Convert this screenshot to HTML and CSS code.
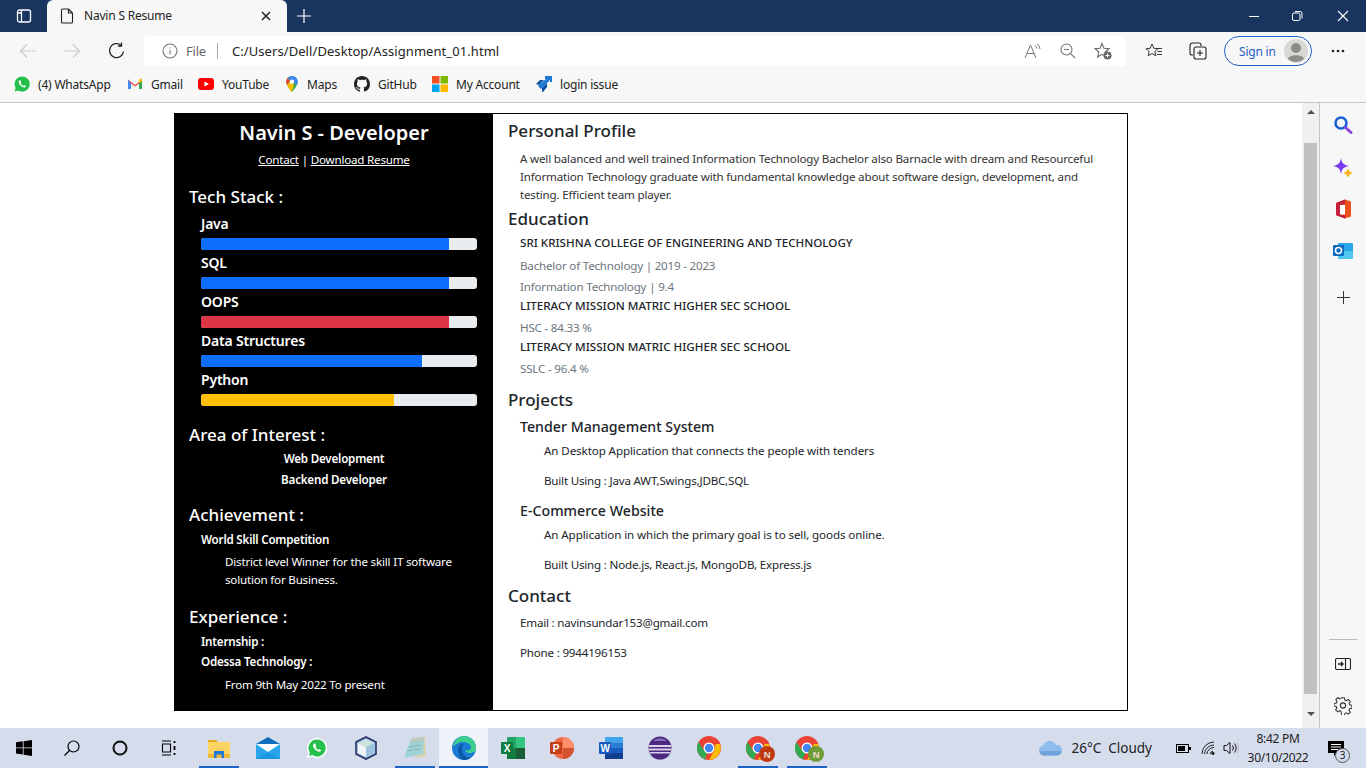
FILE: index.html
```html
<!DOCTYPE html>
<html lang="en">
<head>
    <meta charset="UTF-8">
    <title>Navin S Resume</title>
    <link rel="stylesheet" href="styles.css">
</head>
<body>
    <div class="tabstrip">
        <div class="tab-side">
            <svg width="16" height="16" viewBox="0 0 16 16" fill="none" stroke="#fff" stroke-width="1.3"><rect x="1.5" y="2" width="13" height="12" rx="2"/><path d="M5.5 2v12M1.5 5h4"/></svg>
        </div>
        <div class="tab">
            <svg width="14" height="16" viewBox="0 0 14 16" fill="none" stroke="#222" stroke-width="1.1"><path d="M2.5 1h6l4 4v9a1 1 0 0 1-1 1h-9a1 1 0 0 1-1-1V2a1 1 0 0 1 1-1zM8.500 1v4h4"/></svg>
            <span class="tab-title">Navin S Resume</span>
            <svg class="tab-close" width="10" height="10" viewBox="0 0 10 10" stroke="#222" stroke-width="1.5"><path d="M1 1l8 8M9 1l-8 8"/></svg>
        </div>
        <svg class="new-tab" width="16" height="16" viewBox="0 0 16 16" stroke="#fff" stroke-width="1.2"><path d="M8 1v14M1 8h14"/></svg>
        <div class="win-controls">
            <svg width="12" height="12" viewBox="0 0 12 12" stroke="#fff"><path d="M1 6.5h10"/></svg>
            <svg width="12" height="12" viewBox="0 0 12 12" fill="none" stroke="#fff"><rect x="1.5" y="3" width="7.5" height="7.5" rx="1.5"/><path d="M4 1.500h5a2 2 0 0 1 2 2v5"/></svg>
            <svg width="12" height="12" viewBox="0 0 12 12" stroke="#fff" stroke-width="1.1"><path d="M1 1l10 10M11 1L1 11"/></svg>
        </div>
    </div>

    <div class="toolbar">
        <svg class="nav-back" width="18" height="16" viewBox="0 0 18 16" fill="none" stroke="#ccc" stroke-width="1.2"><path d="M17 8H1.500M8 1.500L1.500 8 8 14.500"/></svg>
        <svg class="nav-forward" width="18" height="16" viewBox="0 0 18 16" fill="none" stroke="#ccc" stroke-width="1.2"><path d="M1 8h15.500M10 1.500L16.500 8 10 14.500"/></svg>
        <svg class="nav-refresh" width="18" height="18" viewBox="0 0 18 18" fill="none" stroke="#222" stroke-width="1.3"><path d="M15.500 9.500A7 7 0 1 1 13 3.200M13.500 0.500v3.500H10"/></svg>
        <div class="address">
            <svg width="16" height="16" viewBox="0 0 16 16" fill="none" stroke="#777" stroke-width="1.1"><circle cx="8" cy="8" r="7"/><path d="M8 7v4.500M8 4.200v1.300"/></svg>
            <span class="addr-file">File</span>
            <span class="addr-sep"></span>
            <span class="addr-url">C:/Users/Dell/Desktop/Assignment_01.html</span>
            <span class="addr-icons">
                <svg width="18" height="16" viewBox="0 0 18 16" fill="none" stroke="#777" stroke-width="1"><path d="M1 15L6.500 2 12 15M3 10.500h7M11 2.500a4 4 0 0 1 2 3M13 1a6 6 0 0 1 3 5"/></svg>
                <svg width="16" height="16" viewBox="0 0 16 16" fill="none" stroke="#777" stroke-width="1.1"><circle cx="6.500" cy="6.500" r="5.500"/><path d="M4 6.500h5M10.500 10.500L15 15"/></svg>
                <svg width="18" height="18" viewBox="0 0 18 18"><path d="M8 1.500l2 4.700 5 .5-3.800 3.300 1.200 5-4.400-2.700-4.400 2.700 1.200-5L1 6.700l5-.5z" fill="none" stroke="#666" stroke-width="1.1"/><circle cx="13.500" cy="13.500" r="4" fill="#666"/><path d="M13.500 11.500v4M11.500 13.500h4" stroke="#fff"/></svg>
            </span>
        </div>
        <svg class="tool-fav" width="18" height="16" viewBox="0 0 18 16" fill="none" stroke="#222" stroke-width="0.9"><path d="M7 1l1.800 4.300 4.200.4-3.200 2.800 1 4.400L7 10.500l-3.800 2.400 1-4.400L1 5.700l4.200-.4zM12 5.500h5M12.500 8.500h4.500M12 11.500h5"/></svg>
        <svg class="tool-coll" width="18" height="18" viewBox="0 0 18 18" fill="none" stroke="#222" stroke-width="1.1"><path d="M4 13H3a2 2 0 0 1-2-2V4a3 3 0 0 1 3-3h6a2 2 0 0 1 2 2v1"/><rect x="5" y="5" width="12" height="12" rx="2"/><path d="M11 8v6M8 11h6"/></svg>
        <div class="signin">
            <span>Sign in</span>
            <svg width="24" height="24" viewBox="0 0 24 24"><circle cx="12" cy="12" r="12" fill="#d8d8d4"/><circle cx="12" cy="9" r="5" fill="#8e8c88"/><path d="M4 20c1-5 15-5 16 0a12 12 0 0 1-16 0z" fill="#8e8c88"/></svg>
        </div>
        <svg class="tool-more" width="14" height="4" viewBox="0 0 14 4" fill="#222"><circle cx="2" cy="2" r="1.3"/><circle cx="7" cy="2" r="1.3"/><circle cx="12" cy="2" r="1.3"/></svg>
    </div>

    <div class="bookmarks">
        <a class="bookmark">
            <svg width="16" height="16" viewBox="0 0 16 16"><path d="M8 .5a7.500 7.500 0 0 0-6.400 11.300L.6 15.400l3.700-1A7.500 7.500 0 1 0 8 .5z" fill="#25c04c"/><path d="M5.500 4.200c-1 .6-1.200 2-.3 3.500 1 1.700 2.400 3 4 3.600 1.300.4 2.300-.1 2.700-1.100l-1.800-1.100-.9.800c-1-.4-1.900-1.300-2.500-2.400l.7-.9-1-2.300z" fill="#fff"/></svg>
            <span>(4) WhatsApp</span>
        </a>
        <a class="bookmark">
            <svg width="16" height="14" viewBox="0 0 16 14"><path d="M1 2.500l7 5.500 7-5.500V12h-3V6.500L8 9.500 4 6.500V12H1z" fill="#ea4335"/><path d="M1 2.500V12h3V6.500z" fill="#4285f4"/><path d="M15 2.500V12h-3V6.500z" fill="#34a853"/><path d="M12 6.500L15 4V2.500l-1.500-1L12 3z" fill="#fbbc04"/></svg>
            <span>Gmail</span>
        </a>
        <a class="bookmark">
            <svg width="16" height="12" viewBox="0 0 16 12"><rect width="16" height="12" rx="3" fill="#f00"/><path d="M6.500 3.500L11 6l-4.500 2.500z" fill="#fff"/></svg>
            <span>YouTube</span>
        </a>
        <a class="bookmark">
            <svg width="14" height="16" viewBox="0 0 14 16"><path d="M7 0a5.800 5.800 0 0 0-5.800 5.800C1.200 10 7 16 7 16s5.800-6 5.800-10.200A5.800 5.800 0 0 0 7 0z" fill="#34a853"/><path d="M7 0a5.800 5.800 0 0 1 5.800 5.800c0 1-.3 2-.8 3L2.500 2.100A5.800 5.800 0 0 1 7 0z" fill="#4285f4"/><path d="M2.500 2.100L5 5 2 9a6 6 0 0 1-.8-3.200 5.800 5.800 0 0 1 1.300-3.700z" fill="#ea4335"/><path d="M2 9l3-3.500L9 9 7 16c-1-1.200-3.800-4-5-7z" fill="#fbbc04"/><circle cx="7" cy="5.800" r="2.200" fill="#fff"/></svg>
            <span>Maps</span>
        </a>
        <a class="bookmark">
            <svg width="16" height="16" viewBox="0 0 16 16" fill="#222"><path d="M8 0C3.580 0 0 3.580 0 8c0 3.540 2.290 6.530 5.470 7.590.4.070.55-.17.550-.38 0-.19-.01-.82-.01-1.490-2.010.37-2.530-.49-2.690-.94-.09-.23-.48-.94-.82-1.130-.28-.15-.68-.52-.01-.53.63-.01 1.080.58 1.230.82.720 1.210 1.870.87 2.330.66.070-.52.280-.87.510-1.070-1.780-.2-3.640-.89-3.640-3.950 0-.87.310-1.590.820-2.150-.080-.2-.360-1.020.080-2.120 0 0 .670-.21 2.200.820.640-.18 1.320-.27 2-.27s1.360.090 2 .270c1.530-1.040 2.200-.820 2.200-.820.440 1.100.160 1.920.080 2.120.510.560.820 1.270.820 2.150 0 3.070-1.870 3.750-3.650 3.950.290.250.540.730.540 1.480 0 1.070-.010 1.930-.010 2.200 0 .210.150.460.550.380A8.010 8.010 0 0 0 16 8c0-4.420-3.580-8-8-8z"/></svg>
            <span>GitHub</span>
        </a>
        <a class="bookmark">
            <svg width="16" height="16" viewBox="0 0 16 16"><rect width="7.500" height="7.500" fill="#f25022"/><rect x="8.500" width="7.500" height="7.500" fill="#7fba00"/><rect y="8.500" width="7.500" height="7.500" fill="#00a4ef"/><rect x="8.500" y="8.500" width="7.500" height="7.500" fill="#ffb900"/></svg>
            <span>My Account</span>
        </a>
        <a class="bookmark">
            <svg width="16" height="16" viewBox="0 0 16 16"><path d="M9 0h7v6h-2V4L5 13 2 10l8-7H9z" fill="#1e78d6"/><path d="M0 8l4-4h4L3 9zM6 12l5-5v4l-4 5H6z" fill="#0d4fa0"/></svg>
            <span>login issue</span>
        </a>
    </div>

    <div class="viewport">
        <div class="page">
            <div class="resume">
                <aside class="left">
                    <h1 class="name">Navin S - Developer</h1>
                    <p class="links"><a href="#contact">Contact</a> | <a href="#resume">Download Resume</a></p>

                    <h2 class="left-head tech-head">Tech Stack :</h2>
                    <div class="skill">
                        <div class="skill-name">Java</div>
                        <div class="bar"><div class="fill blue" style="width: 90%"></div></div>
                    </div>
                    <div class="skill">
                        <div class="skill-name">SQL</div>
                        <div class="bar"><div class="fill blue" style="width: 90%"></div></div>
                    </div>
                    <div class="skill">
                        <div class="skill-name">OOPS</div>
                        <div class="bar"><div class="fill red" style="width: 90%"></div></div>
                    </div>
                    <div class="skill">
                        <div class="skill-name">Data Structures</div>
                        <div class="bar"><div class="fill blue" style="width: 80%"></div></div>
                    </div>
                    <div class="skill">
                        <div class="skill-name">Python</div>
                        <div class="bar"><div class="fill yellow" style="width: 70%"></div></div>
                    </div>

                    <h2 class="left-head area-head">Area of Interest :</h2>
                    <p class="interest">Web Development</p>
                    <p class="interest">Backend Developer</p>

                    <h2 class="left-head achieve-head">Achievement :</h2>
                    <p class="left-sub">World Skill Competition</p>
                    <p class="left-text">District level Winner for the skill IT software solution for Business.</p>

                    <h2 class="left-head exp-head">Experience :</h2>
                    <p class="left-sub">Internship :</p>
                    <p class="left-sub odessa">Odessa Technology :</p>
                    <p class="left-text from">From 9th May 2022 To present</p>
                </aside>

                <main class="right">
                    <h2 class="right-head first">Personal Profile</h2>
                    <p class="profile">A well balanced and well trained Information Technology Bachelor also Barnacle with dream and Resourceful Information Technology graduate with fundamental knowledge about software design, development, and testing. Efficient team player.</p>

                    <h2 class="right-head edu-head">Education</h2>
                    <p class="school first-school">SRI KRISHNA COLLEGE OF ENGINEERING AND TECHNOLOGY</p>
                    <p class="muted tall">Bachelor of Technology | 2019 - 2023</p>
                    <p class="muted next">Information Technology | 9.4</p>
                    <p class="school">LITERACY MISSION MATRIC HIGHER SEC SCHOOL</p>
                    <p class="muted">HSC - 84.33 %</p>
                    <p class="school">LITERACY MISSION MATRIC HIGHER SEC SCHOOL</p>
                    <p class="muted">SSLC - 96.4 %</p>

                    <h2 class="right-head gap-head">Projects</h2>
                    <h3 class="project">Tender Management System</h3>
                    <p class="project-text desc">An Desktop Application that connects the people with tenders</p>
                    <p class="project-text built">Built Using : Java AWT,Swings,JDBC,SQL</p>
                    <h3 class="project next-project">E-Commerce Website</h3>
                    <p class="project-text desc">An Application in which the primary goal is to sell, goods online.</p>
                    <p class="project-text built">Built Using : Node.js, React.js, MongoDB, Express.js</p>

                    <h2 class="right-head gap-head">Contact</h2>
                    <p class="contact-line email">Email : navinsundar153@gmail.com</p>
                    <p class="contact-line">Phone : 9944196153</p>
                </main>
            </div>
        </div>

        <div class="scrollbar">
            <div class="scroll-btn"><span class="arrow-up"></span></div>
            <div class="thumb"></div>
            <div class="scroll-btn bottom"><span class="arrow-down"></span></div>
        </div>

        <div class="edge-side">
            <svg class="side-search" width="20" height="20" viewBox="0 0 20 20" fill="none"><circle cx="8" cy="8" r="5.500" stroke="#1a62d6" stroke-width="2.6"/><path d="M12.500 12.500l5.500 5" stroke="#8b45e0" stroke-width="3" stroke-linecap="round"/></svg>
            <svg class="side-spark" width="20" height="20" viewBox="0 0 20 20"><path d="M8 0c.8 5 2.500 7 8 8-5.500 1-7.200 3-8 8-.8-5-2.500-7-8-8 5.500-1 7.200-3 8-8z" fill="#7a3cf0"/><path d="M15 11.500v7M11.500 15h7" stroke="#f5b21b" stroke-width="2.4"/></svg>
            <svg class="side-office" width="17" height="20" viewBox="0 0 17 20"><path d="M10 .5L1 4v12l9 3.500 6-2V2.500z" fill="#e8501c"/><path d="M10 .5L1 4v12l4 1.500V6l5-1.500z" fill="#c5203a"/><path d="M1 16l9 .5v3z" fill="#b8183c"/><path d="M5 6h5v9.500H5z" fill="#fff"/></svg>
            <svg class="side-outlook" width="20" height="18" viewBox="0 0 20 18"><rect x="5" y="1" width="15" height="16" rx="1" fill="#28a8ea"/><path d="M5 9h15v8H5z" fill="#50c8f0"/><rect y="3" width="11" height="11" rx="1" fill="#0f6cbd"/><circle cx="5.500" cy="8.500" r="3" fill="none" stroke="#fff" stroke-width="1.5"/></svg>
            <svg class="side-plus" width="13" height="13" viewBox="0 0 13 13" stroke="#333"><path d="M6.500 0v13M0 6.500h13"/></svg>
            <div class="side-spacer"></div>
            <div class="side-line"></div>
            <svg class="side-hide" width="16" height="12" viewBox="0 0 16 12" fill="none" stroke="#222" stroke-width="1.1"><rect x=".5" y=".5" width="15" height="11" rx="1.500"/><path d="M10.500 .5v11"/><path d="M3 6h5M6 4l2 2-2 2" stroke-width="1.3"/></svg>
            <svg class="side-gear" width="18" height="18" viewBox="0 0 18 18" fill="none" stroke="#333" stroke-width="1.1"><path d="M7.500 1h3l.5 2.400 1.600.7 2.100-1.300 2 2.100-1.300 2 .7 1.600 2.400.5-.1 0v3l-2.300.5-.7 1.600 1.300 2-2.100 2.100-2-1.300-1.600.7-.5 2.300h-3L7 15.300l-1.600-.7-2 1.300-2.100-2.100 1.300-2-.7-1.600L-.4 9.700V7l2.500-.5.7-1.600-1.300-2 2.100-2.100 2 1.300L7 1.400z" transform="translate(.4 -.2) scale(.95)"/><circle cx="9" cy="8.500" r="2.600"/></svg>
        </div>
    </div>

    <div class="taskbar">
        <div class="task-item">
            <svg width="16" height="16" viewBox="0 0 16 16" fill="#000"><path d="M0 2.300l6.800-1v6.200H0zM7.600 1.200L16 0v7.500H7.600zM0 8.300h6.800v6.300l-6.800-1zM7.600 8.300H16V16l-8.400-1.200z"/></svg>
        </div>
        <div class="task-item">
            <svg width="16" height="16" viewBox="0 0 16 16" fill="none" stroke="#000" stroke-width="1.2"><circle cx="9.500" cy="6.500" r="5.500"/><path d="M5.500 10.500L.5 15.500"/></svg>
        </div>
        <div class="task-item">
            <svg width="16" height="16" viewBox="0 0 16 16" fill="none" stroke="#111" stroke-width="2"><circle cx="8" cy="8" r="6.500"/></svg>
        </div>
        <div class="task-item">
            <svg width="16" height="16" viewBox="0 0 16 16" fill="none" stroke="#000" stroke-width="1.1"><path d="M1 1h9M1 15h9M1.500 4h8v8h-8z"/><path d="M13.500 1v2M13.500 6v4M13.500 13v2" stroke-width="1.8"/></svg>
        </div>
        <div class="task-item running">
            <svg width="22" height="19" viewBox="0 0 22 19"><path d="M0 1h8l2 2h-10z" fill="#e8a820"/><path d="M0 3h22v16H0z" fill="#fcd462"/><path d="M0 15h22v4H0z" fill="#f0b93a"/><path d="M6 12h10v7h-2.500v-3.500h-5V19H6z" fill="#1e78d6"/></svg>
        </div>
        <div class="task-item">
            <svg width="24" height="22" viewBox="0 0 24 22"><path d="M12 0l12 7H0z" fill="#0f6cbd"/><rect y="7" width="24" height="15" fill="#28a8ea"/><path d="M0 7l12 8 12-8z" fill="#fff"/><path d="M0 22l12-7 12 7z" fill="#1490df" opacity=".7"/></svg>
        </div>
        <div class="task-item">
            <svg width="22" height="22" viewBox="0 0 22 22"><path d="M11 1a10 10 0 0 0-8.600 15L1 21l5.200-1.400A10 10 0 1 0 11 1z" fill="#fff"/><path d="M11 2.500a8.500 8.500 0 0 0-7.200 13L3 19l3.500-.9A8.500 8.500 0 1 0 11 2.500z" fill="#25c04c"/><path d="M8 6.500c-1.200.7-1.300 2.500-.3 4.200 1.100 1.900 2.700 3.200 4.500 3.900 1.500.4 2.700-.1 3.100-1.300l-2-1.300-1 .9c-1.100-.5-2.100-1.500-2.800-2.700l.8-1-1.100-2.600z" fill="#fff"/></svg>
        </div>
        <div class="task-item">
            <svg width="22" height="24" viewBox="0 0 22 24"><path d="M11 1l10 5v12l-10 5-10-5V6z" fill="#9fc4de" stroke="#2a2f6b" stroke-width="1.6"/><path d="M11 3L19 7l-8 4-8-4z" fill="#cfe3df"/><path d="M3 7l8 4v10l-8-4z" fill="#f0f4f8"/></svg>
        </div>
        <div class="task-item running">
            <svg width="24" height="24" viewBox="0 0 24 24"><path d="M9 2l13-1 1 19-3 1-8 1z" fill="#d8d2ae"/><path d="M8 3l13-2-1 17-19 4z" fill="#9fd2d6"/><path d="M8 3l13-2 .3 3-14 2z" fill="#c4c6bc"/><path d="M6 11l11-2M4 15l12-2" stroke="#7fb8bd"/></svg>
        </div>
        <div class="task-item active">
            <svg width="24" height="24" viewBox="0 0 24 24"><circle cx="12" cy="12" r="12" fill="#1b7ad6"/><path d="M12 0a12 12 0 0 1 12 12c0 3.500-3 5-6 5-4 0-5-2-5-3 2 .8 6 .6 6-2.500C19 8 15 6 11 6 7 6 3 8 1 11 2 5 6 0 12 0z" fill="#3ccf8e"/><path d="M6 13c0-3 2.500-5 5.500-5C9.500 11 9 16 13 20c2 2 5 2 7 1-2.500 2-5 3-8 3C8 24 6 18 6 13z" fill="#0c59a4"/></svg>
        </div>
        <div class="task-item">
            <svg width="24" height="22" viewBox="0 0 24 22"><rect x="6" width="18" height="22" rx="1" fill="#21a366"/><rect x="15" width="9" height="11" fill="#33c481"/><rect x="6" y="11" width="9" height="11" fill="#107c41"/><rect x="15" y="11" width="9" height="11" fill="#185c37"/><rect y="5" width="12" height="12" rx="1" fill="#107c41"/><text x="6" y="15" class="letter">X</text></svg>
        </div>
        <div class="task-item">
            <svg width="24" height="24" viewBox="0 0 24 24"><circle cx="13" cy="12" r="11" fill="#ed6c47"/><path d="M13 1a11 11 0 0 1 11 11H13z" fill="#ff8f6b"/><path d="M13 12h11a11 11 0 0 1-11 11z" fill="#d35230"/><rect y="6" width="12" height="12" rx="1" fill="#c43e1c"/><text x="6" y="16" class="letter">P</text></svg>
        </div>
        <div class="task-item">
            <svg width="24" height="22" viewBox="0 0 24 22"><rect x="6" width="18" height="22" rx="1" fill="#2b7cd3"/><rect x="6" width="18" height="6" fill="#41a5ee"/><rect x="6" y="11" width="18" height="5" fill="#185abd"/><rect x="6" y="16" width="18" height="6" fill="#103f91"/><rect y="5" width="12" height="12" rx="1" fill="#185abd"/><text x="6" y="15" class="letter">W</text></svg>
        </div>
        <div class="task-item">
            <svg width="24" height="24" viewBox="0 0 24 24"><circle cx="12" cy="12" r="11.500" fill="#4b2a80"/><path d="M5 5a10 10 0 0 1 14 0z" fill="#8a6cb8"/><path d="M1 9h22v2H1zM.5 12.500h23v2H.5zM2 16h20v1.500H2z" fill="#dcd0ec"/></svg>
        </div>
        <div class="task-item">
            <svg class="chrome" width="24" height="24" viewBox="0 0 24 24"><circle cx="12" cy="12" r="12" fill="#ea4335"/><path d="M12 24A12 12 0 0 1 1.600 6L7 14.500l3.500 2.500-3 7z" fill="#34a853"/><path d="M12 24l5.500-10 1-6H23a12 12 0 0 1-11 16z" fill="#fbbc04"/><circle cx="12" cy="12" r="5.500" fill="#fff"/><circle cx="12" cy="12" r="4.200" fill="#4285f4"/></svg>
        </div>
        <div class="task-item running">
            <svg class="chrome" width="24" height="24" viewBox="0 0 24 24"><circle cx="12" cy="12" r="12" fill="#ea4335"/><path d="M12 24A12 12 0 0 1 1.600 6L7 14.500l3.500 2.500-3 7z" fill="#34a853"/><path d="M12 24l5.500-10 1-6H23a12 12 0 0 1-11 16z" fill="#fbbc04"/><circle cx="12" cy="12" r="5.500" fill="#fff"/><circle cx="12" cy="12" r="4.200" fill="#4285f4"/></svg>
            <span class="profile-badge red-badge">N</span>
        </div>
        <div class="task-item running">
            <svg class="chrome" width="24" height="24" viewBox="0 0 24 24"><circle cx="12" cy="12" r="12" fill="#ea4335"/><path d="M12 24A12 12 0 0 1 1.600 6L7 14.500l3.500 2.500-3 7z" fill="#34a853"/><path d="M12 24l5.500-10 1-6H23a12 12 0 0 1-11 16z" fill="#fbbc04"/><circle cx="12" cy="12" r="5.500" fill="#fff"/><circle cx="12" cy="12" r="4.200" fill="#4285f4"/></svg>
            <span class="profile-badge green-badge">N</span>
        </div>

        <div class="tray">
            <svg class="cloud" width="25" height="16" viewBox="0 0 25 16"><path d="M6 15.500a5 5 0 0 1-.8-9.900A7 7 0 0 1 18 5a5.300 5.300 0 0 1 1.500 10.500z" fill="#8fbcea"/><path d="M1.500 11h22a5 5 0 0 1-4 4.500H6A5 5 0 0 1 1.500 11z" fill="#6fa3dc"/></svg>
            <span class="weather">26°C&nbsp; Cloudy</span>
            <svg class="battery" width="15" height="9" viewBox="0 0 15 9"><rect x=".5" y=".5" width="12" height="8" fill="none" stroke="#000"/><rect x="2" y="2" width="7" height="5"/><rect x="13" y="3" width="2" height="3"/></svg>
            <svg class="wifi" width="14" height="14" viewBox="0 0 14 14" fill="none" stroke="#222"><path d="M1 13A12 12 0 0 1 13 1M3.500 13A9.500 9.500 0 0 1 13 4M6 13a7 7 0 0 1 7-6.500M9 13a4 4 0 0 1 3-3"/><circle cx="12" cy="12.500" r="1.200" fill="#222"/></svg>
            <svg class="volume" width="16" height="14" viewBox="0 0 16 14" fill="none" stroke="#111"><path d="M1 4.500h2.500L7 1.500v11l-3.500-3H1z"/><path d="M9.500 4.500a4 4 0 0 1 0 5M11.500 2.500a7 7 0 0 1 0 9"/><path d="M13.500 1a9 9 0 0 1 0 12" stroke="#bbb"/></svg>
            <div class="clock"><span>8:42 PM</span><span>30/10/2022</span></div>
            <div class="notify">
                <svg width="16" height="15" viewBox="0 0 16 15"><path d="M0 0h16v12H9l-3 3v-3H0z"/><path d="M3 3.500h10M3 6h10M3 8.500h7" stroke="#fff"/></svg>
                <span class="notify-count">3</span>
            </div>
        </div>
    </div>
</body>
</html>
```

FILE: styles.css
```css
* {
    box-sizing: border-box;
}
html, body {
    height: 100%;
}
body {
    margin: 0;
    height: 768px;
    overflow: hidden;
    display: flex;
    flex-direction: column;
    font-family: "Noto Sans", "Open Sans", Arial, sans-serif;
    font-size: 11.6px;
    letter-spacing: -0.2px;
    color: #212529;
    background-color: #fff;
}
h1, h2, h3, p {
    margin: 0;
}

/* browser top */
.tabstrip {
    height: 32px;
    flex: none;
    display: flex;
    align-items: center;
    background-color: #17355f;
}
.tab-side {
    width: 47px;
    padding-left: 16px;
    display: flex;
}
.tab {
    width: 240px;
    height: 32px;
    display: flex;
    align-items: center;
    padding: 0 16px 0 13px;
    background-color: #f7f7f7;
    border-radius: 6px 6px 0 0;
}
.tab-title {
    margin-left: 10px;
    padding-bottom: 1px;
    flex: 1;
    font-size: 12px;
    color: #222;
}
.new-tab {
    margin-left: 9px;
}
.win-controls {
    margin-left: auto;
    display: grid;
    grid-template-columns: 43px 46px 29px;
}
.toolbar {
    height: 38px;
    flex: none;
    display: flex;
    align-items: center;
    background-color: #f7f7f7;
}
.nav-back {
    margin-left: 19px;
}
.nav-forward {
    margin-left: 26px;
}
.nav-refresh {
    margin-left: 27px;
}
.address {
    margin-left: 18px;
    width: 982px;
    height: 30px;
    display: flex;
    align-items: center;
    padding-left: 18px;
    background-color: #fff;
    border-radius: 4px;
}
.addr-file {
    margin-left: 8px;
    font-size: 13px;
    color: #666;
}
.addr-sep {
    width: 1px;
    height: 16px;
    margin-left: 11px;
    background-color: #aaa;
}
.addr-url {
    margin-left: 14px;
    font-size: 13px;
    letter-spacing: 0.07px;
    color: #222;
}
.addr-icons {
    margin-left: auto;
    display: flex;
    align-items: center;
    gap: 18px;
    padding-right: 14px;
}
.tool-fav {
    margin-left: 19px;
}
.tool-coll {
    margin-left: 26px;
}
.signin {
    margin-left: 17px;
    width: 88px;
    height: 30px;
    display: flex;
    align-items: center;
    justify-content: space-between;
    padding: 0 3px 0 14px;
    font-size: 12px;
    color: #1f62c6;
    border: 1px solid #1f62c6;
    border-radius: 15px;
}
.tool-more {
    margin-left: 19px;
}
.bookmarks {
    height: 32px;
    flex: none;
    display: grid;
    grid-template-columns: 113px 71px 87px 69px 78px 104px auto;
    align-items: center;
    padding: 0 0 4px 14px;
    font-size: 12px;
    background-color: #f7f7f7;
}
.bookmark {
    display: flex;
    align-items: center;
    gap: 8px;
    color: #222;
}
.bookmark svg {
    flex: none;
}

/* page area */
.viewport {
    flex: 1;
    display: flex;
    border-top: 1px solid #c6c6c6;
    min-height: 0;
}
.page {
    width: 1302px;
    padding: 10px 0 0 174px;
}
.resume {
    width: 954px;
    height: 598px;
    display: flex;
    border: 1px solid #000;
}
.left {
    width: 318px;
    flex: none;
    padding: 5px 14px 0;
    color: #fff;
    background-color: #000;
}
.name {
    font-size: 20px;
    font-weight: 600;
    line-height: 28px;
    letter-spacing: 0;
    text-align: center;
}
.links {
    margin-top: 4px;
    line-height: 18px;
    text-align: center;
}
.links a {
    color: #fff;
    text-decoration: underline;
}
.left-head {
    font-size: 17px;
    font-weight: 500;
    line-height: 24px;
    letter-spacing: 0;
}
.tech-head {
    margin-top: 16px;
    margin-bottom: 6px;
}
.area-head {
    margin-top: 17px;
}
.achieve-head {
    margin-top: 14px;
}
.exp-head {
    margin-top: 16px;
}
.skill {
    margin: 0 0 4px 12px;
}
.skill-name {
    font-size: 14px;
    font-weight: 600;
    line-height: 18px;
    margin-bottom: 5px;
}
.bar {
    width: 276px;
    height: 12px;
    overflow: hidden;
    background-color: #e9ecef;
    border-radius: 3px;
}
.fill {
    height: 100%;
}
.blue {
    background-color: #0d6efd;
}
.red {
    background-color: #dc3545;
}
.yellow {
    background-color: #ffc107;
}
.interest {
    margin-top: 3px;
    font-weight: 600;
    line-height: 18px;
    text-align: center;
}
.left-sub {
    margin: 4px 0 0 12px;
    font-weight: 600;
    line-height: 18px;
}
.odessa {
    margin-top: 2px;
}
.left-text {
    margin: 4px 0 0 36px;
    line-height: 18px;
}
.from {
    margin-top: 5px;
}
.right {
    flex: 1;
    padding: 5px 0 0 15px;
}
.right-head {
    font-size: 17px;
    font-weight: 500;
    line-height: 24px;
    letter-spacing: 0;
    color: #212529;
}
.edu-head {
    margin-top: 3px;
}
.gap-head {
    margin-top: 10px;
}
.profile {
    margin: 7px 20px 0 12px;
    line-height: 18px;
    letter-spacing: -0.18px;
    color: #333;
}
.school {
    margin: 1px 0 0 12px;
    font-weight: 500;
    line-height: 18px;
    letter-spacing: 0;
}
.first-school {
    margin-top: 3px;
}
.muted {
    margin: 4px 0 0 12px;
    line-height: 18px;
    color: #6c757d;
}
.tall {
    margin-top: 5px;
}
.next {
    margin-top: 3px;
}
.project {
    margin: 4px 0 0 12px;
    font-size: 14.2px;
    font-weight: 500;
    line-height: 22px;
    letter-spacing: 0;
}
.next-project {
    margin-top: 10px;
}
.project-text {
    margin: 4px 0 0 36px;
    line-height: 18px;
}
.desc {
    letter-spacing: -0.1px;
}
.built {
    margin-top: 12px;
}
.contact-line {
    margin: 12px 0 0 12px;
    line-height: 18px;
}
.email {
    margin-top: 6px;
}

/* scrollbar and edge sidebar */
.scrollbar {
    width: 17px;
    flex: none;
    display: flex;
    flex-direction: column;
    background-color: #f0f0f0;
}
.scroll-btn {
    height: 40px;
    display: flex;
    justify-content: center;
    padding-top: 7px;
}
.scroll-btn.bottom {
    height: 34px;
    padding-top: 18px;
}
.arrow-up {
    width: 0;
    height: 0;
    border: 4px solid transparent;
    border-top: 0;
    border-bottom: 4px solid #505050;
}
.arrow-down {
    width: 0;
    height: 0;
    border: 4px solid transparent;
    border-bottom: 0;
    border-top: 4px solid #505050;
}
.thumb {
    width: 13px;
    height: 551px;
    margin-left: 2px;
    background-color: #c1c1c1;
}
.edge-side {
    flex: 1;
    display: flex;
    flex-direction: column;
    align-items: center;
    padding-top: 12px;
    border-left: 1px solid #c6c6c6;
    background-color: #f7f7f7;
}
.side-spark {
    margin-top: 23px;
}
.side-office {
    margin-top: 21px;
}
.side-outlook {
    margin-top: 23px;
}
.side-plus {
    margin-top: 31px;
}
.side-spacer {
    flex: 1;
}
.side-line {
    width: 28px;
    height: 1px;
    background-color: #bbb;
}
.side-hide {
    margin-top: 18px;
}
.side-gear {
    margin: 27px 0 13px;
}

/* taskbar */
.taskbar {
    height: 40px;
    flex: none;
    display: flex;
    background-color: #d5dcec;
}
.task-item {
    width: 49px;
    flex: none;
    display: flex;
    align-items: center;
    justify-content: center;
    position: relative;
}
.task-item:nth-child(1), .task-item:nth-child(2), .task-item:nth-child(3) {
    width: 48px;
}
.task-item:nth-child(4) {
    width: 50px;
}
.running::after {
    content: "";
    position: absolute;
    left: 5px;
    right: 4px;
    bottom: 0;
    height: 2px;
    background-color: #1f62c6;
}
.active {
    background-color: #eff2f9;
}
.active::after {
    content: "";
    position: absolute;
    left: 0;
    right: 0;
    bottom: 0;
    height: 2px;
    background-color: #1f62c6;
}
.letter {
    font-family: "Liberation Sans", Arial, sans-serif;
    font-size: 10px;
    font-weight: 700;
    fill: #fff;
    text-anchor: middle;
}
.profile-badge {
    position: absolute;
    right: 7px;
    bottom: 6px;
    width: 16px;
    height: 16px;
    display: flex;
    align-items: center;
    justify-content: center;
    font-size: 9px;
    font-weight: 700;
    color: #e8d8c8;
    border-radius: 50%;
}
.red-badge {
    background-color: #c0380f;
}
.green-badge {
    background-color: #6f9a35;
}
.tray {
    margin-left: auto;
    display: flex;
    align-items: center;
    color: #222;
}
.weather {
    margin-left: 9px;
    font-size: 13.5px;
    letter-spacing: 0;
}
.battery {
    margin-left: 24px;
}
.wifi {
    margin-left: 10px;
}
.volume {
    margin-left: 8px;
}
.clock {
    margin-left: 8px;
    width: 62px;
    display: flex;
    flex-direction: column;
    align-items: center;
    font-size: 12px;
    letter-spacing: -0.3px;
    line-height: 19px;
}
.notify {
    position: relative;
    margin: 0 22px 0 19px;
    width: 16px;
    display: flex;
}
.notify-count {
    position: absolute;
    left: 7px;
    top: 7px;
    width: 15px;
    height: 15px;
    display: flex;
    align-items: center;
    justify-content: center;
    font-size: 10px;
    background-color: #d5dcec;
    border: 1px solid #555;
    border-radius: 50%;
}
```
